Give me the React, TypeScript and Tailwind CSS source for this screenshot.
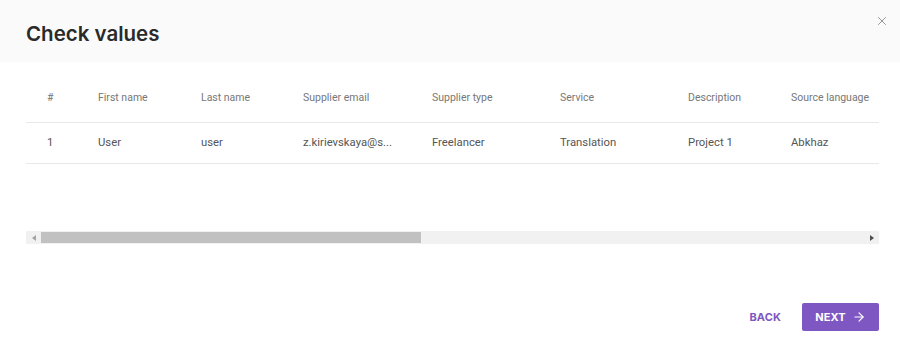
import { ArrowRight, X } from 'lucide-react'

const columns = [
  { label: '#', width: 'w-[51px]' },
  { label: 'First name', width: 'w-[103px]' },
  { label: 'Last name', width: 'w-[102px]' },
  { label: 'Supplier email', width: 'w-[129px]' },
  { label: 'Supplier type', width: 'w-[128px]' },
  { label: 'Service', width: 'w-[128px]' },
  { label: 'Description', width: 'w-[103px]' },
  { label: 'Source language', width: 'w-[130px]' },
]

const row = ['1', 'User', 'user', 'z.kirievskaya@s...', 'Freelancer', 'Translation', 'Project 1', 'Abkhaz']

export default function App() {
  return (
    <div className="h-[352px] w-[900px] bg-white font-['Inter','Roboto',sans-serif]">
      {/* Header */}
      <div className="relative flex h-[62px] items-center bg-[#fafafa] px-[26px] pt-[6px]">
        <h2 className="text-[20.5px] font-semibold leading-none text-[#2a2a2a]">Check values</h2>
        <button type="button" className="absolute right-[11px] top-[14px] text-[#888]">
          <X size={14} strokeWidth={1.5} />
        </button>
      </div>

      {/* Table */}
      <div className="ml-[26px] mr-[21px] mt-[13px]">
        <div className="h-[156px] overflow-hidden">
          <table className="w-[874px] table-fixed border-collapse text-left font-['Roboto',sans-serif]">
            <thead>
              <tr className="h-[47px] border-b border-[#e8e8e8] text-[10.5px] text-[#777]">
                {columns.map((c) => (
                  <th key={c.label} className={`${c.width} whitespace-nowrap pl-[21px] font-normal`}>
                    {c.label}
                  </th>
                ))}
              </tr>
            </thead>
            <tbody>
              <tr className="h-[41px] border-b border-[#e8e8e8] text-[11.3px] text-[#555]">
                {row.map((v, i) => (
                  <td key={i} className="whitespace-nowrap pl-[21px] pt-[2px]">
                    {v}
                  </td>
                ))}
              </tr>
            </tbody>
          </table>
        </div>

        {/* Scrollbar */}
        <div className="flex h-[13px] items-center bg-[#f1f1f1]">
          <div className="flex w-[15px] justify-center">
            <span className="h-0 w-0 border-y-[3px] border-r-[4px] border-y-transparent border-r-[#a3a3a3]" />
          </div>
          <div className="h-[11px] w-[380px] bg-[#c1c1c1]" />
          <div className="flex-1" />
          <div className="flex w-[15px] justify-center">
            <span className="h-0 w-0 border-y-[3px] border-l-[4px] border-y-transparent border-l-[#505050]" />
          </div>
        </div>
      </div>

      {/* Footer */}
      <div className="mt-[59px] flex items-center justify-end gap-[21px] px-[21px]">
        <button type="button" className="text-[11px] font-bold tracking-[0.01em] text-[#7e57c2]">
          BACK
        </button>
        <button
          type="button"
          className="flex h-[28px] w-[77px] items-center justify-center gap-[6px] rounded-[2px] bg-[#7e57c2] text-[11px] font-bold tracking-[0.01em] text-white"
        >
          NEXT
          <ArrowRight size={14} strokeWidth={2} />
        </button>
      </div>
    </div>
  )
}
